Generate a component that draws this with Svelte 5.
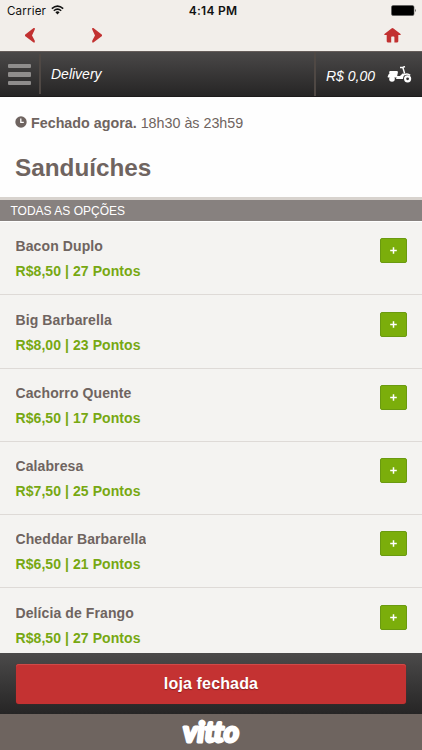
<script>
	let open = false;
	let total = '0,00';

	let items = [
		{ name: 'Bacon Duplo', price: '8,50', points: 27 },
		{ name: 'Big Barbarella', price: '8,00', points: 23 },
		{ name: 'Cachorro Quente', price: '6,50', points: 17 },
		{ name: 'Calabresa', price: '7,50', points: 25 },
		{ name: 'Cheddar Barbarella', price: '6,50', points: 21 },
		{ name: 'Delícia de Frango', price: '8,50', points: 27 }
	];
</script>

<main>
	<div class="status">
		<div class="carrier">
			<span>Carrier</span>
			<svg width="13" height="10" viewBox="0 0 13 10">
				<path d="M0.8 3.6 Q6.5 -1.4 12.2 3.6 M2.8 5.7 Q6.5 2.5 10.2 5.7" fill="none" stroke="#111" stroke-width="1.5" />
				<path d="M4.4 7.2 Q6.5 5.4 8.6 7.2 L6.5 9.4 Z" fill="#111" />
			</svg>
		</div>
		<div class="time">4:14 PM</div>
		<svg class="battery" width="26" height="11" viewBox="0 0 26 11">
			<rect x="0.5" y="0.5" width="22.5" height="10" rx="1.6" fill="#000" stroke="#555" stroke-width="0.6" />
			<path d="M24 3.8 Q25.4 5.5 24 7.2 Z" fill="#222" />
		</svg>
	</div>

	<nav>
		<button class="icon" aria-label="Voltar">
			<svg width="10" height="15" viewBox="0 0 10 15"><path d="M8.6 0 H9.8 V1.4 L7 7.4 L9.8 12.8 V14.4 H8.6 L0 8 V6.7 Z" fill="#c23131" /></svg>
		</button>
		<button class="icon" aria-label="Avançar">
			<svg width="10" height="15" viewBox="0 0 10 15"><path d="M1.4 0 H0.2 V1.4 L3 7.4 L0.2 12.8 V14.4 H1.4 L10 8 V6.7 Z" fill="#c23131" /></svg>
		</button>
		<button class="icon home" aria-label="Início">
			<svg width="17" height="15" viewBox="0 0 17 15"><path d="M7.5 0.4 Q8.5 -0.3 9.5 0.4 L16.6 6 Q17 7 16 7.1 H14.3 V13.3 Q14.3 14.4 13.2 14.4 H10.4 V9.3 Q10.4 8.6 9.7 8.6 H7.9 Q7.2 8.6 7.2 9.3 V14.4 H3.8 Q2.7 14.4 2.7 13.3 V7.1 H1 Q0 7 0.4 6 Z" fill="#c23131" /></svg>
		</button>
	</nav>

	<header>
		<button class="menu" aria-label="Menu"><i></i><i></i><i></i></button>
		<div class="title">Delivery</div>
		<div class="cart">
			<span>R$ {total}</span>
			<svg width="25" height="17" viewBox="0 0 25 17">
				<path d="M3 5 H10 Q11.2 5.2 10.9 6.4 L10 10.8 H0.8 Q1 8.6 2.6 7.3 L2 6.1 Z" fill="#fff" />
				<path d="M0.8 10.8 H13.2 L16.4 7.8 M15.9 1.6 L17.6 7.4 M13 1.6 H16.2 M16 1.2 L18 0.6" fill="none" stroke="#fff" stroke-width="1.5" />
				<path d="M10 10.4 H13.2 L17.4 7 L18 8.6 Q16.2 9.8 15.9 13 H9 Z" fill="#fff" />
				<circle cx="5" cy="13" r="2.8" fill="#fff" />
				<circle cx="20.6" cy="12.8" r="2.5" fill="none" stroke="#fff" stroke-width="2.2" />
				<path d="M17.4 8.8 Q20.4 7 23.2 9.4" fill="none" stroke="#fff" stroke-width="1.5" />
			</svg>
		</div>
	</header>

	<section class="intro">
		<div class="hours">
			<svg width="12" height="12" viewBox="0 0 12 12">
				<circle cx="6" cy="6" r="5.7" fill="#6f6460" />
				<path d="M5.8 2.5 V6.4 H8.8" fill="none" stroke="#fff" stroke-width="1.3" />
			</svg>
			<b>Fechado agora.</b>
			<span>18h30 às 23h59</span>
		</div>
		<h1>Sanduíches</h1>
	</section>

	<h2>TODAS AS OPÇÕES</h2>

	<ul>
		{#each items as item}
			<li>
				<div>
					<div class="name">{item.name}</div>
					<div class="price">R${item.price} | {item.points} Pontos</div>
				</div>
				<button class="add" aria-label="Adicionar {item.name}">
					<svg width="7" height="7" viewBox="0 0 7 7"><path d="M3.5 0.2 V6.8 M0.2 3.5 H6.8" stroke="#fff" stroke-width="1.5" /></svg>
				</button>
			</li>
		{/each}
	</ul>

	<div class="checkout">
		<button disabled={!open}>{open ? 'fechar pedido' : 'loja fechada'}</button>
	</div>

	<footer>
		<svg width="64" height="36" viewBox="0 0 64 36">
			<text x="4" y="28" textLength="56" lengthAdjust="spacingAndGlyphs">vitto</text>
		</svg>
	</footer>
</main>

<style>
	:global(body) {
		margin: 0;
		background: #f4f3f1;
	}
	* {
		box-sizing: border-box;
	}
	main {
		display: flex;
		flex-direction: column;
		height: 750px;
		overflow: hidden;
		font-family: "Liberation Sans", Arial, sans-serif;
		color: #6f6460;
		background: #f4f3f1;
	}
	button {
		margin: 0;
		padding: 0;
		border: 0;
		background: none;
		font-family: inherit;
	}
	svg {
		display: block;
		flex: none;
	}
	.status {
		display: grid;
		grid-template-columns: 1fr auto 1fr;
		align-items: center;
		height: 22px;
		padding: 0 5px 0 7px;
		flex: none;
		background: #f2eeea;
		color: #111;
		font-family: Inter, sans-serif;
		font-size: 11.6px;
	}
	.carrier {
		display: flex;
		align-items: center;
		gap: 5px;
		letter-spacing: 0.15px;
	}
	.carrier svg {
		margin-top: -2px;
	}
	.time {
		margin: -1px 0 0 2px;
		font-weight: 600;
		font-size: 12px;
		letter-spacing: 0.25px;
	}
	.battery {
		justify-self: end;
		margin-top: -2px;
	}
	nav {
		display: flex;
		height: 29px;
		padding: 6px 21px 0 25px;
		gap: 57px;
		flex: none;
		align-items: flex-start;
		background: #f2eeea;
	}
	.home {
		margin-left: auto;
	}
	header {
		display: flex;
		height: 46px;
		flex: none;
		border-top: 1px solid #655d5a;
		border-bottom: 1px solid #1d1b1b;
		background: linear-gradient(#4a4848, #262525);
		color: #fff;
		font-style: italic;
		font-size: 14px;
	}
	.menu {
		display: flex;
		flex-direction: column;
		gap: 4px;
		width: 41px;
		height: 40px;
		margin-top: 2px;
		padding: 10px 0 0 8px;
		border-right: 2px solid #4f4844;
	}
	.menu i {
		width: 23px;
		height: 4.3px;
		border-radius: 1px;
		background: #8f8d8c;
	}
	.title {
		padding: 14px 0 0 10px;
		line-height: 16px;
	}
	.cart {
		display: flex;
		gap: 12px;
		width: 108px;
		margin-left: auto;
		padding: 14px 0 0 10px;
		border-left: 2px solid #4f4844;
		line-height: 20px;
	}
	.cart span {
		white-space: nowrap;
	}
	.intro {
		height: 100px;
		padding: 17px 15px 0;
		flex: none;
		background: #fefefe;
	}
	.hours {
		display: flex;
		align-items: center;
		gap: 4px;
		font-size: 14.3px;
		line-height: 18px;
	}
	.hours svg {
		margin-top: -2px;
	}
	h1 {
		margin: 21px 0 0;
		font-size: 24.3px;
		line-height: 30px;
	}
	h2 {
		height: 25px;
		margin: 0;
		padding-left: 10.5px;
		flex: none;
		border-top: 3px solid #d8d3ce;
		border-bottom: 1px solid #fff;
		background: #87817f;
		color: #fff;
		font-size: 12px;
		font-weight: normal;
		line-height: 22px;
	}
	ul {
		flex: 1;
		min-height: 0;
		margin: 0;
		padding: 0;
		overflow: hidden;
		list-style: none;
	}
	li {
		display: flex;
		justify-content: space-between;
		align-items: flex-start;
		height: 73.3px;
		padding: 16.3px 15px 0 15.5px;
		border-bottom: 1px solid #dedad7;
		font-size: 14px;
		font-weight: bold;
	}
	.name {
		height: 16px;
		overflow: hidden;
		line-height: 17px;
		letter-spacing: 0.1px;
	}
	.price {
		margin-top: 8px;
		line-height: 18px;
		letter-spacing: 0.07px;
		color: #77a812;
	}
	.add {
		display: flex;
		align-items: center;
		justify-content: center;
		width: 27px;
		height: 25px;
		border: 1px solid #6a9a10;
		border-radius: 2px;
		background: #7bae0b;
	}
	.checkout {
		height: 61px;
		padding: 11px 16px 10px;
		flex: none;
		background: linear-gradient(#4b4a4a, #262525);
	}
	.checkout button {
		display: block;
		width: 100%;
		height: 40px;
		border-radius: 3px;
		box-shadow: inset 0 1px 0 #d04a48, 0 0 1px #8c2523;
		background: #c43232;
		color: #fff;
		font-size: 16px;
		font-weight: bold;
		letter-spacing: 0.15px;
		text-shadow: 0 1px 1px #8a2020;
	}
	footer {
		display: flex;
		justify-content: center;
		height: 36px;
		flex: none;
		background: #6e645f;
	}
	footer text {
		fill: #fff;
		stroke: #fff;
		stroke-width: 2.8;
		stroke-linejoin: round;
		font: italic 700 28px Lato, sans-serif;
	}
</style>
